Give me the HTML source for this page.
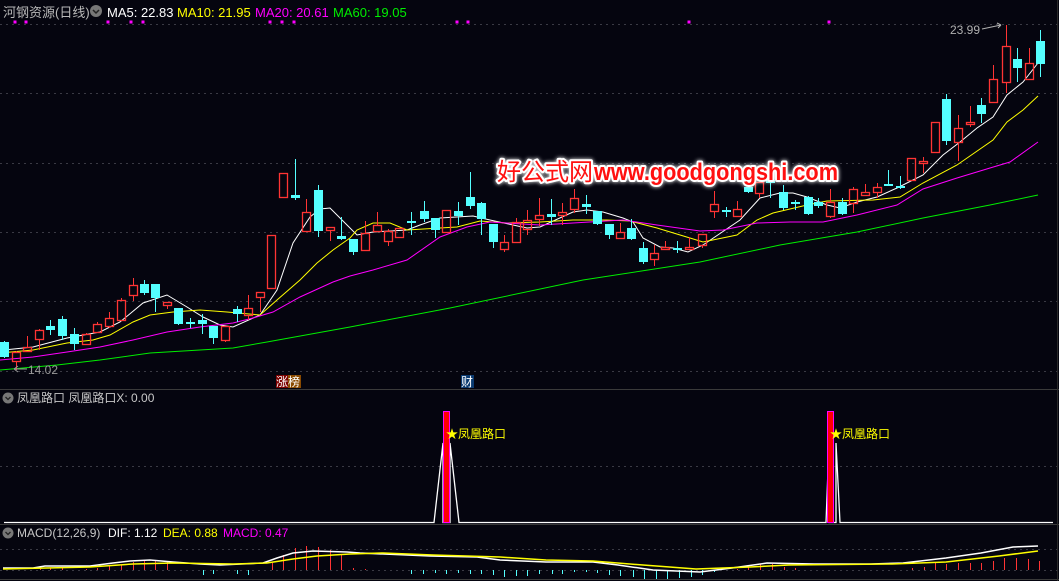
<!DOCTYPE html>
<html><head><meta charset="utf-8"><style>
html,body{margin:0;padding:0;background:#05050f;overflow:hidden}
svg{display:block}
text{font-family:"Liberation Sans","Noto Sans CJK SC",sans-serif}
</style></head><body>
<svg id="s" width="1059" height="581" xmlns="http://www.w3.org/2000/svg">
<rect width="1059" height="581" fill="#05050f"/>
<g stroke="#3a3a44" stroke-dasharray="2,4" stroke-width="1">
<line x1="0" y1="24.5" x2="1059" y2="24.5"/>
<line x1="0" y1="93.5" x2="1059" y2="93.5"/>
<line x1="0" y1="163.5" x2="1059" y2="163.5"/>
<line x1="0" y1="232.5" x2="1059" y2="232.5"/>
<line x1="0" y1="301.5" x2="1059" y2="301.5"/>
<line x1="0" y1="371.5" x2="1059" y2="371.5"/>
<line x1="0" y1="466.5" x2="1059" y2="466.5"/>
<line x1="0" y1="549.5" x2="1059" y2="549.5"/>
<line x1="0" y1="570.5" x2="1059" y2="570.5"/>
</g>
<line x1="0" y1="389.5" x2="1059" y2="389.5" stroke="#3a3a3a"/>
<line x1="0" y1="524.5" x2="1059" y2="524.5" stroke="#3a3a3a"/>
<line x1="0" y1="579.5" x2="1059" y2="579.5" stroke="#3a3a3a"/>
<line x1="1057.5" y1="0" x2="1057.5" y2="581" stroke="#2a2a2a"/>
<g id="mas"></g>
<g id="cd"></g>
<text x="3" y="17" font-size="13" fill="#b8b8b8">河钢资源(日线)</text>
<circle cx="96" cy="11" r="6" fill="#777"/><path d="M93 10l3 3 3-3" stroke="#222" stroke-width="1.5" fill="none"/>
<text x="107" y="17" font-size="13" fill="#fff">MA5: 22.83</text>
<text x="177" y="17" font-size="13" fill="#ffff00">MA10: 21.95</text>
<text x="255" y="17" font-size="13" fill="#ff00ff">MA20: 20.61</text>
<text x="333" y="17" font-size="13" fill="#00ee00">MA60: 19.05</text>
<g fill="#ff00ff" id="sq"></g>
<text x="28" y="374" font-size="12" fill="#9a9a9a">14.02</text>
<path d="M14 369h13M14 369l4-3M14 369l4 3" stroke="#9a9a9a" fill="none"/>
<text x="950" y="34" font-size="12" fill="#b0b0b0">23.99</text>
<path d="M982 29l19-4M1001 25l-4-2M1001 25l-3 3" stroke="#b0b0b0" fill="none"/>
<rect x="276" y="375" width="12" height="13" fill="#7a0000"/><rect x="288" y="375" width="13" height="13" fill="#8a4a00"/>
<text x="276" y="386" font-size="12" fill="#fff">涨榜</text>
<rect x="461" y="375" width="13" height="13" fill="#0a3a70"/>
<text x="461" y="386" font-size="12" fill="#fff">财</text>
<g font-size="24" fill="#ff1010" stroke="#ffffff" stroke-width="4" stroke-linejoin="round" paint-order="stroke" style="filter:drop-shadow(0 0 2px #fff)">
<text x="497" y="180" textLength="96" lengthAdjust="spacingAndGlyphs">好公式网</text>
<text x="594" y="180" font-weight="bold" textLength="244" lengthAdjust="spacingAndGlyphs">www.goodgongshi.com</text>
</g>
<circle cx="8" cy="398" r="5.5" fill="#777"/><path d="M5.5 397l2.5 2.5 2.5-2.5" stroke="#222" stroke-width="1.3" fill="none"/>
<text x="17" y="402" font-size="12" fill="#c8c8c8">凤凰路口  凤凰路口X: 0.00</text>
<path d="M4 522.5H434L443 443V522.5H450V443L459 522.5H826L829 443V522.5H836V443L840 522.5H1053" stroke="#fff" fill="none" stroke-width="1.3"/>
<rect x="443.5" y="411.5" width="6" height="111" fill="#ff0000" stroke="#ff00ff"/>
<rect x="827.5" y="411.5" width="6" height="111" fill="#ff0000" stroke="#ff00ff"/>
<text x="446" y="438" font-size="12" fill="#ffff00">★凤凰路口</text>
<text x="830" y="438" font-size="12" fill="#ffff00">★凤凰路口</text>
<circle cx="8" cy="533" r="5.5" fill="#777"/><path d="M5.5 532l2.5 2.5 2.5-2.5" stroke="#222" stroke-width="1.3" fill="none"/>
<text x="17" y="537" font-size="12" fill="#c8c8c8">MACD(12,26,9)</text>
<text x="108" y="537" font-size="12" fill="#fff">DIF: 1.12</text>
<text x="163" y="537" font-size="12" fill="#ffff00">DEA: 0.88</text>
<text x="223" y="537" font-size="12" fill="#ff00ff">MACD: 0.47</text>
<g id="mc"></g>
</svg>
<script>
var NS="http://www.w3.org/2000/svg";
function el(p,t,a){var e=document.createElementNS(NS,t);for(var k in a)e.setAttribute(k,a[k]);document.getElementById(p).appendChild(e);return e;}
[15,26,108,131,143,270,282,294,457,468,689,829].forEach(function(x){el("sq","rect",{x:x-1.5,y:20.5,width:3,height:3});});
var C=[[4,'c',342,357,341,358],[16,'r',352,361,351,370],[27,'r',347,351,336,352],[39,'r',330,339,329,350],[50,'c',326,330,320,335],[62,'c',319,336,316,340],[74,'c',334,344,328,350],[86,'r',334,344,333,345],[97,'r',324,332,322,333],[109,'r',318,326,312,328],[121,'r',300,320,298,321],[133,'r',285,295,278,301],[144,'c',284,293,280,295],[155,'c',284,298,284,312],[167,'r',302,305,302,309],[178,'c',308,324,308,325],[190,'c',322,324,318,328],[202,'c',320,324,314,334],[213,'c',326,338,326,344],[225,'r',326,340,326,342],[237,'c',309,314,306,322],[248,'r',308,315,295,320],[260,'r',292,297,292,312],[271,'r',235,288,235,289],[283,'r',173,197,173,197],[295,'c',195,198,159,200],[306,'r',212,231,199,232],[318,'c',190,231,185,237],[330,'r',227,230,227,241],[341,'c',236,239,217,240],
[353,'c',239,252,239,255],[365,'r',233,250,221,251],[377,'r',225,231,212,232],[388,'r',231,241,229,246],[399,'r',228,237,228,238],[411,'c',221,223,212,235],[424,'c',211,219,201,222],[435,'c',218,230,218,238],[446,'r',210,232,210,233],[458,'c',211,216,202,225],[470,'c',197,206,172,209],[481,'c',203,219,202,235],[493,'c',224,242,224,248],[504,'r',242,249,235,252],[516,'r',222,242,218,243],[527,'r',220,229,210,235],[539,'r',215,219,198,226],[551,'c',214,217,199,225],[562,'r',212,215,203,225],[574,'r',198,209,189,213],[586,'c',204,207,195,214],[597,'c',211,224,211,225],[609,'c',224,235,224,239],[620,'r',232,238,223,239],[631,'c',228,239,219,240],[643,'c',248,262,242,264],[654,'r',253,259,245,266],[665,'r',247,249,241,250],[677,'c',248,250,241,253],[689,'r',247,249,237,250],[702,'r',234,245,234,248],[714,'r',204,211,191,218],[726,'c',210,212,207,217],[737,'r',209,216,201,217],[748,'c',187,192,183,193],[759,'r',182,193,182,198],[770,'c',180,183,178,198],[783,'c',192,208,185,210],[795,'c',202,204,200,210],[808,'c',197,214,196,215],[818,'c',202,206,198,208],[830,'r',202,216,189,218],[842,'c',202,214,198,215],[853,'r',189,203,187,213],[865,'r',192,195,184,196],[877,'r',187,192,183,198],[888,'c',184,186,170,186],[900,'c',186,188,176,189],[911,'r',158,180,158,181],[923,'r',161,163,157,173],[935,'r',122,152,122,153],[946,'c',99,141,94,145],[958,'r',128,142,115,161],[970,'r',122,124,106,127],[981,'c',105,114,98,123],[993,'r',79,102,65,103],[1006,'r',46,82,25,93],[1017,'c',59,68,48,82],[1029,'r',63,79,48,80],[1040,'c',41,64,30,77]];
C.forEach(function(c){var x=c[0],col=c[1]=='r'?'#ff3434':'#54ffff';
 if(c[1]=='r'){el("cd","line",{x1:x+.5,y1:c[4],x2:x+.5,y2:c[2],stroke:col});el("cd","line",{x1:x+.5,y1:c[3],x2:x+.5,y2:c[5],stroke:col});
  el("cd","rect",{x:x-3.5,y:c[2]+.5,width:8,height:Math.max(c[3]-c[2],1),fill:"none",stroke:col,"stroke-width":1.3});}
 else{el("cd","line",{x1:x+.5,y1:c[4],x2:x+.5,y2:c[5],stroke:col});el("cd","rect",{x:x-4,y:c[2],width:9,height:Math.max(c[3]-c[2],1.5),fill:col});}});
function pl(g,pts,col,w){el(g,"polyline",{points:pts,fill:"none",stroke:col,"stroke-width":w||1});}
pl("mas","4,350 33,347 67,338 100,332 120,322 143,303 167,295 187,307 203,317 220,325 233,327 260,315 277,290 293,243 310,217 320,209 330,208 340,218 357,235 373,232 390,231 407,230 420,225 440,218 473,216 490,220 513,225 527,228 540,227 573,212 587,210 603,212 623,218 633,222 643,238 660,247 673,248 688,252 703,245 740,220 760,198 780,193 793,193 807,197 827,205 840,208 857,202 877,197 897,188 923,175 943,155 960,142 977,128 993,117 1007,95 1023,82 1038,63","#fff");
pl("mas","0,353 33,350 67,343 93,340 110,335 133,322 150,315 173,312 200,310 227,312 260,315 277,300 300,280 317,263 333,250 350,238 357,230 373,223 390,223 407,230 440,228 457,227 480,221 507,223 540,222 573,220 607,220 630,221 657,228 690,238 703,242 737,235 757,220 773,213 807,205 827,201 873,200 900,197 923,183 957,165 993,140 1007,122 1023,110 1038,96","#ffff00");
pl("mas","0,360 33,357 67,352 100,347 133,340 167,332 200,327 233,323 253,318 273,312 300,297 333,282 350,276 373,270 407,260 440,237 467,227 490,222 540,225 573,223 623,220 657,225 700,231 723,230 757,223 790,222 823,222 857,215 897,205 923,189 957,178 990,168 1010,162 1038,142","#ff00ff");
pl("mas","0,370 57,365 100,360 150,353 200,350 233,348 267,342 350,327 450,308 583,280 700,262 780,245 857,232 923,218 990,205 1038,195","#00ee00");
var B=[[40,569],[50,568],[62,568],[86,569],[97,568],[109,566],[121,565],[133,562],[144,561],[155,561],[167,562],[203,575],[213,574],[237,574],[248,575],[272,563],[283,555],[295,548],[306,546],[318,547],[330,550],[341,554],[353,568],[365,569],[411,574],[423,574],[435,573],[446,574],[458,573],[470,574],[481,574],[493,575],
[504,577],[516,576],[527,576],[539,574],[552,574],[562,574],[574,572],[586,572],[597,573],[609,575],[620,576],[633,577],[644,579],[656,579],[667,579],[679,578],[691,577],[702,575],[714,572],
[737,569],[748,567],[760,564],[772,564],[784,567],[795,568],[807,570],[912,568],[924,567],[935,563],[946,564],[958,563],[970,563],[981,563],[993,561],[1004,558],[1016,558],[1028,559],[1039,561]];
B.forEach(function(b){el("mc","line",{x1:b[0]+.5,y1:570,x2:b[0]+.5,y2:b[1],stroke:b[1]<570?"#ff3434":"#54ffff"});});
pl("mc","3,568 33,568 45,566 90,566 113,563 130,561 150,560 173,562 200,564 220,565 263,563 277,558 293,553 313,551 347,552 360,553 430,556 477,557 500,560 546,562 593,562 618,565 653,570 700,572 732,568 767,563 814,564 871,564 903,563 946,558 981,553 1013,547 1038,546","#fff",1.5);
pl("mc","3,569 90,567 133,564 173,563 233,564 267,563 293,559 317,556 350,554 383,553 433,555 500,557 546,560 593,561 643,565 696,569 750,567 789,565 892,564 946,562 999,556 1038,551","#ffff00",1.5);
</script>
</body></html>
